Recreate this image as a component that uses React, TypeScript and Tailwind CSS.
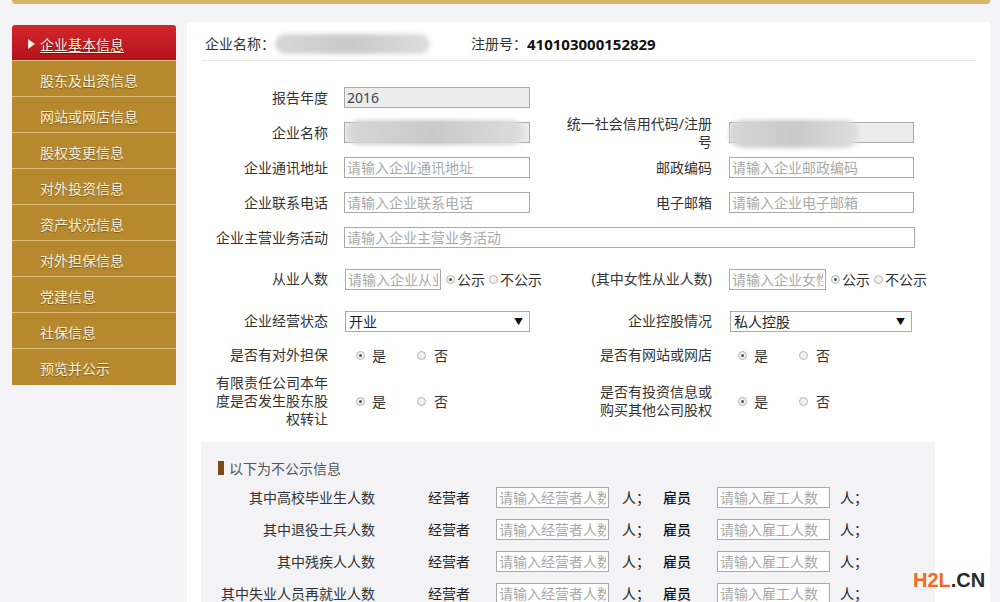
import React from "react";

const navItems = [
  "企业基本信息",
  "股东及出资信息",
  "网站或网店信息",
  "股权变更信息",
  "对外投资信息",
  "资产状况信息",
  "对外担保信息",
  "党建信息",
  "社保信息",
  "预览并公示",
];

function Sidebar() {
  return (
    <div className="ml-[12px] mt-[21px] w-[164px] shrink-0 overflow-hidden rounded-[3px]">
      {navItems.map((t, i) =>
        i === 0 ? (
          <div
            key={t}
            className="flex h-[36px] items-center border-b border-[#e0bd78] bg-linear-to-b from-[#d3252c] to-[#b4121a] pl-[16px] pt-[3px] text-[14px] text-[#fbf1dc] [text-shadow:0_1px_1px_rgba(0,0,0,0.35)]"
          >
            <span className="mr-[5px] h-0 w-0 border-y-[5px] border-l-[7px] border-y-transparent border-l-[#fbf1dc]" />
            <span className="underline underline-offset-2">{t}</span>
          </div>
        ) : (
          <div
            key={t}
            className={
              i === navItems.length - 1
                ? "flex h-[36px] items-center bg-[#b6892f] pl-[28px] pt-[3px] text-[14px] text-[#fbf1dc] [text-shadow:0_1px_1px_rgba(0,0,0,0.35)]"
                : "flex h-[36px] items-center border-b border-[#e0bd78] bg-[#b6892f] pl-[28px] pt-[3px] text-[14px] text-[#fbf1dc] [text-shadow:0_1px_1px_rgba(0,0,0,0.35)]"
            }
          >
            {t}
          </div>
        )
      )}
    </div>
  );
}

function TextInput({ w, placeholder, value, disabled }: { w: string; placeholder?: string; value?: string; disabled?: boolean }) {
  return (
    <input
      className={`${w} h-[21px] border border-[#a9a9a9] px-[2px] text-[14px] text-[#444] outline-none placeholder:text-[#a9a9a9] ${disabled ? "bg-[#ececec]" : "bg-white"}`}
      placeholder={placeholder}
      defaultValue={value}
      readOnly
    />
  );
}

function Radio({ checked }: { checked?: boolean }) {
  return (
    <span className="inline-flex h-[9px] w-[9px] shrink-0 items-center justify-center rounded-full border border-[#b5b5b5] bg-[#f0f0f0]">
      {checked ? <span className="h-[3px] w-[3px] rounded-full bg-[#555]" /> : null}
    </span>
  );
}

function FakeSelect({ w, text }: { w: string; text: string }) {
  return (
    <div className={`${w} flex h-[21px] items-center justify-between border border-[#a9a9a9] bg-white pl-[3px] pr-[6px] text-[14px] text-[#222]`}>
      <span>{text}</span>
      <span className="text-[9px] leading-none text-[#111]">▼</span>
    </div>
  );
}

function YesNo({ first }: { first: string }) {
  return (
    <div className={`${first} flex items-center`}>
      <Radio checked />
      <span className="ml-[7px]">是</span>
      <span className="ml-[31px] flex items-center">
        <Radio />
      </span>
      <span className="ml-[8px]">否</span>
    </div>
  );
}

function Blur({ w, h }: { w: string; h: string }) {
  return <div className={`${w} ${h} rounded-full bg-linear-to-r from-[#d6d6d6] via-[#c9c9c9] to-[#dedede] blur-[2px]`} />;
}

function Main() {
  const leftLabel = "w-[126px] shrink-0 text-right leading-[18px]";
  const rightLabel = "w-[150px] shrink-0 text-right leading-[18px]";
  return (
    <div className="ml-[11px] mt-[18px] h-[600px] w-[803px] shrink-0 bg-white">
      {/* header */}
      <div className="mx-[15px] flex items-center border-b border-[#e6e6e6] pb-[6px] pl-[3px] pt-[12px]">
        <span className="leading-[20px]">企业名称：</span>
        <Blur w="w-[155px]" h="h-[20px]" />
        <span className="ml-[41px] leading-[20px]">注册号：</span>
        <span className="font-['Noto_Sans',sans-serif] text-[15px] font-bold leading-[20px] text-[#111]">410103000152829</span>
      </div>

      {/* form */}
      <div className="ml-[15px] pt-[19px]">
        <div className="flex h-[35px] items-center">
          <div className="flex w-[360px] items-center">
            <div className={leftLabel}>报告年度</div>
            <div className="ml-[16px]">
              <TextInput w="w-[186px]" value="2016" disabled />
            </div>
          </div>
        </div>

        <div className="flex h-[35px] items-center">
          <div className="flex w-[360px] items-center">
            <div className={leftLabel}>企业名称</div>
            <div className="relative ml-[16px] h-[21px] w-[186px] border border-[#a9a9a9] bg-[#ececec]">
              <div className="absolute left-[2px] top-[-3px]">
                <Blur w="w-[178px]" h="h-[25px]" />
              </div>
            </div>
          </div>
          <div className="flex items-center">
            <div className={rightLabel}>
              统一社会信用代码/注册
              <br />号
            </div>
            <div className="relative ml-[17px] h-[21px] w-[185px] border border-[#a9a9a9] bg-[#ececec]">
              <div className="absolute left-[-1px] top-[-3px]">
                <Blur w="w-[130px]" h="h-[28px]" />
              </div>
            </div>
          </div>
        </div>

        <div className="flex h-[35px] items-center">
          <div className="flex w-[360px] items-center">
            <div className={leftLabel}>企业通讯地址</div>
            <div className="ml-[16px]">
              <TextInput w="w-[186px]" placeholder="请输入企业通讯地址" />
            </div>
          </div>
          <div className="flex items-center">
            <div className={rightLabel}>邮政编码</div>
            <div className="ml-[17px]">
              <TextInput w="w-[185px]" placeholder="请输入企业邮政编码" />
            </div>
          </div>
        </div>

        <div className="flex h-[35px] items-center">
          <div className="flex w-[360px] items-center">
            <div className={leftLabel}>企业联系电话</div>
            <div className="ml-[16px]">
              <TextInput w="w-[186px]" placeholder="请输入企业联系电话" />
            </div>
          </div>
          <div className="flex items-center">
            <div className={rightLabel}>电子邮箱</div>
            <div className="ml-[17px]">
              <TextInput w="w-[185px]" placeholder="请输入企业电子邮箱" />
            </div>
          </div>
        </div>

        <div className="flex h-[35px] items-center">
          <div className={leftLabel}>企业主营业务活动</div>
          <div className="ml-[16px]">
            <TextInput w="w-[571px]" placeholder="请输入企业主营业务活动" />
          </div>
        </div>

        <div className="flex h-[48px] items-center">
          <div className="flex w-[360px] items-center">
            <div className={leftLabel}>从业人数</div>
            <div className="ml-[17px] flex items-center">
              <TextInput w="w-[96px]" placeholder="请输入企业从业人数" />
              <span className="ml-[5px] flex items-center">
                <Radio checked />
              </span>
              <span className="ml-[2px]">公示</span>
              <span className="ml-[4px] flex items-center">
                <Radio />
              </span>
              <span className="ml-[2px]">不公示</span>
            </div>
          </div>
          <div className="flex items-center">
            <div className={rightLabel}>(其中女性从业人数)</div>
            <div className="ml-[17px] flex items-center">
              <TextInput w="w-[97px]" placeholder="请输入企业女性从业人数" />
              <span className="ml-[5px] flex items-center">
                <Radio checked />
              </span>
              <span className="ml-[2px]">公示</span>
              <span className="ml-[4px] flex items-center">
                <Radio />
              </span>
              <span className="ml-[2px]">不公示</span>
            </div>
          </div>
        </div>

        <div className="flex h-[36px] items-center">
          <div className="flex w-[360px] items-center">
            <div className={leftLabel}>企业经营状态</div>
            <div className="ml-[17px]">
              <FakeSelect w="w-[185px]" text="开业" />
            </div>
          </div>
          <div className="flex items-center">
            <div className={rightLabel}>企业控股情况</div>
            <div className="ml-[18px]">
              <FakeSelect w="w-[182px]" text="私人控股" />
            </div>
          </div>
        </div>

        <div className="flex h-[32px] items-center">
          <div className="flex w-[360px] items-center">
            <div className={leftLabel}>是否有对外担保</div>
            <YesNo first="ml-[28px]" />
          </div>
          <div className="flex items-center">
            <div className={rightLabel}>是否有网站或网店</div>
            <YesNo first="ml-[26px]" />
          </div>
        </div>

        <div className="flex h-[60px] items-center">
          <div className="flex w-[360px] items-center">
            <div className={leftLabel}>
              有限责任公司本年
              <br />
              度是否发生股东股
              <br />
              权转让
            </div>
            <YesNo first="ml-[28px]" />
          </div>
          <div className="flex items-center">
            <div className={rightLabel}>
              是否有投资信息或
              <br />
              购买其他公司股权
            </div>
            <YesNo first="ml-[26px]" />
          </div>
        </div>
      </div>

      {/* non-public section */}
      <div className="ml-[14px] mt-[11px] h-[200px] w-[734px] bg-[#f3f3f5] pt-[16px]">
        <div className="flex h-[20px] items-center pl-[17px]">
          <span className="h-[14px] w-[6px] bg-[#7b4a17]" />
          <span className="ml-[5px] text-[#555]">以下为不公示信息</span>
        </div>
        <div className="mt-[3px]">
          {["其中高校毕业生人数", "其中退役士兵人数", "其中残疾人人数", "其中失业人员再就业人数"].map((l) => (
            <div key={l} className="flex h-[32px] items-center">
              <div className="w-[174px] shrink-0 text-right">{l}</div>
              <span className="ml-[53px] text-[#222]">经营者</span>
              <span className="ml-[26px]">
                <TextInput w="w-[113px]" placeholder="请输入经营者人数" />
              </span>
              <span className="ml-[13px] text-[#222]">人；</span>
              <span className="ml-[13px] font-medium text-[#111]">雇员</span>
              <span className="ml-[26px]">
                <TextInput w="w-[113px]" placeholder="请输入雇工人数" />
              </span>
              <span className="ml-[10px] text-[#222]">人；</span>
            </div>
          ))}
        </div>
      </div>
    </div>
  );
}

export default function App() {
  return (
    <div className="relative h-[602px] w-[1000px] overflow-hidden bg-[#f4f4f6] font-['Noto_Sans','Noto_Sans_CJK_SC',sans-serif] text-[14px] text-[#333]">
      <div className="ml-[12px] mr-[10px] h-[4px] rounded-b-[3px] bg-[#d6b46c]" />
      <div className="flex">
        <Sidebar />
        <Main />
      </div>
      <div className="absolute left-[913px] top-[570px] font-['Liberation_Sans',Arial,sans-serif] text-[20px] font-bold leading-none">
        <span className="text-[#f26b1d]">H2L</span>
        <span className="text-[#2a2a2a]">.CN</span>
      </div>
    </div>
  );
}
